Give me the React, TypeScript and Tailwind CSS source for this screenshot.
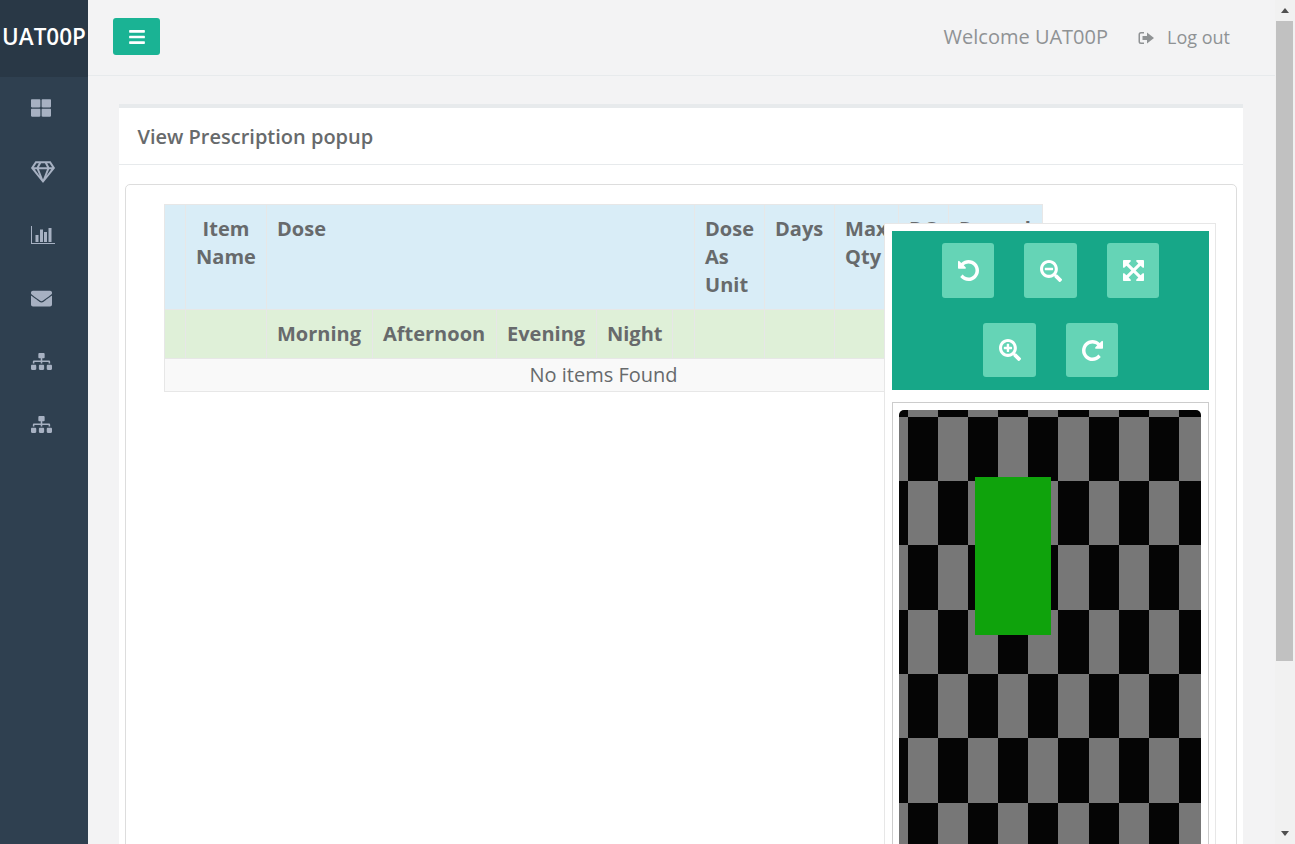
import React from 'react';
import { FaBars, FaThLarge, FaRegGem, FaEnvelope, FaSitemap, FaSearchMinus, FaSearchPlus } from 'react-icons/fa';

const BarChartIcon = () => (
  <svg width="24" height="18" viewBox="0 0 24 18" fill="currentColor">
    <path d="M0 0h1v17h23v1H0z" />
    <rect x="4.5" y="9" width="3" height="7" />
    <rect x="9" y="3.5" width="3" height="12.5" />
    <rect x="13" y="6" width="3" height="10" />
    <rect x="17.5" y="2" width="3" height="14" />
  </svg>
);

const SignOutIcon = () => (
  <svg width="17" height="14" viewBox="0 0 17 14" fill="currentColor">
    <path d="M6 1H3a2.500 2.500 0 0 0-2.500 2.500v7A2.500 2.500 0 0 0 3 13h3v-1.500H3a1 1 0 0 1-1-1v-7a1 1 0 0 1 1-1h3z" />
    <path d="M4.500 5H9V1.500L16 7l-7 5.500V9H4.500z" />
  </svg>
);

const undoPath =
  'M1536 640q0 156-61 298t-164 245-245 164-298 61q-172 0-327-72.500t-264-204.500q-7-10-6.500-22.500t8.500-20.500l137-138q10-9 25-9 16 2 23 12 73 95 179 147t225 52q104 0 198.500-40.500t163.500-109.500 109.500-163.500 40.500-198.500-40.500-198.500-109.500-163.500-163.500-109.500-198.500-40.500q-98 0-188 35.500t-160 101.500l137 138q31 30 14 69-17 40-59 40h-448q-26 0-45-19t-19-45v-448q0-42 40-59 39-17 69 14l130 129q107-101 244.500-156.500t284.500-55.500q156 0 298 61t245 164 164 245 61 298z';

const UndoIcon = () => (
  <svg width="21" height="21" viewBox="0 -128 1536 1536" fill="currentColor">
    <path d={undoPath} />
  </svg>
);

const RedoIcon = () => (
  <svg width="21" height="21" viewBox="0 -128 1536 1536" fill="currentColor">
    <path d={undoPath} transform="matrix(-1 0 0 1 1536 0)" />
  </svg>
);

const ExpandIcon = () => (
  <svg width="21" height="21" viewBox="0 0 1536 1536" fill="currentColor">
    <path d="M1283 413l-355 355 355 355 144-144q29-31 70-14 39 17 39 59v448q0 26-19 45t-45 19h-448q-42 0-59-40-17-39 14-69l144-144-355-355-355 355 144 144q31 30 14 69-17 40-59 40h-448q-26 0-45-19t-19-45v-448q0-42 40-59 39-17 69 14l144 144 355-355-355-355-144 144q-19 19-45 19-12 0-24-5-40-17-40-59v-448q0-26 19-45t45-19h448q42 0 59 40 17 39-14 69l-144 144 355 355 355-355-144-144q-31-30-14-69 17-40 59-40h448q26 0 45 19t19 45v448q0 42-39 59-13 5-25 5-26 0-45-19z" />
  </svg>
);

// test pattern shown inside the viewer
const Checkerboard = () => {
  const xs = [899, 908, 938, 968, 998, 1028, 1058, 1089, 1119, 1149, 1179, 1201];
  const ys = [410, 417, 481, 545, 610, 674, 738, 803, 867];
  const cells: React.ReactNode[] = [];
  for (let r = 0; r < ys.length - 1; r++) {
    for (let c = 0; c < xs.length - 1; c++) {
      cells.push(
        <rect
          key={`${r}-${c}`}
          x={xs[c] - 899}
          y={ys[r] - 410}
          width={xs[c + 1] - xs[c]}
          height={ys[r + 1] - ys[r]}
          fill={(r + c) % 2 === 0 ? '#050505' : '#777777'}
        />
      );
    }
  }
  return (
    <svg width="302" height="457" viewBox="0 0 302 457" className="block">
      {cells}
      <rect x="76" y="67" width="76" height="158" fill="#0fa30c" />
    </svg>
  );
};

const ViewerButton = ({ size, children }: { size: string; children: React.ReactNode }) => (
  <button className={`${size} rounded-[3px] bg-[#65d4b6] text-white flex items-center justify-center`}>
    {children}
  </button>
);

const navIcons = [
  <FaThLarge size={20} className="-mt-[2px]" />,
  <FaRegGem size={24} />,
  <BarChartIcon />,
  <FaEnvelope size={21} />,
  <FaSitemap size={21} />,
  <FaSitemap size={21} />,
];

const thClass = 'border border-[#e7e7e7] p-[10px] align-top text-left font-bold';

export default function App() {
  return (
    <div className="h-[844px] w-[1295px] overflow-hidden flex bg-[#f3f3f4] text-[#676a6c] font-['Open_Sans',sans-serif]">
      <aside className="w-[88px] shrink-0 bg-[#2f4050] text-[#a7b1c2]">
        <div className="h-[77px] pb-[3px] bg-[#293846] text-white text-[22.500px] font-semibold flex items-center justify-center">
          UAT00P
        </div>
        <nav className="flex flex-col">
          {navIcons.map((icon, i) => (
            <div key={i} className="h-[63.200px] flex items-center pl-[31px]">
              {icon}
            </div>
          ))}
        </nav>
      </aside>

      <main className="flex-1 min-w-0 flex flex-col">
        <header className="h-[76px] shrink-0 border-b border-[#e7eaec] flex items-center pl-[25px] pr-[65px] pb-[2px]">
          <button className="w-[47px] h-[37px] rounded-[3px] bg-[#1ab394] text-white flex items-center justify-center">
            <FaBars size={18} />
          </button>
          <div className="ml-auto flex items-center text-[#8f9294]">
            <span className="text-[20px]">Welcome UAT00P</span>
            <span className="ml-[30px] pt-[2px] flex items-center gap-[12px] text-[18px] font-medium">
              <SignOutIcon />
              Log out
            </span>
          </div>
        </header>

        <div className="flex-1 min-h-0 pt-[28px] pl-[31px] pr-[52px]">
          <section className="relative h-full bg-white border-t-4 border-[#e7eaec]">
            <h5 className="h-[57px] pt-[2px] px-[18.500px] flex items-center text-[20px] font-semibold border-b border-[#e7eaec]">
              View Prescription popup
            </h5>
            <div className="mx-[6px] mt-[19px] h-[800px] rounded-[5px] border border-[#dddddd] pt-[19px] pl-[38px]">
              <table className="w-[878px] table-fixed border-collapse text-[20px] leading-[28px]">
                <colgroup>
                  <col className="w-[21px]" />
                  <col className="w-[81px]" />
                  <col className="w-[106px]" />
                  <col className="w-[124px]" />
                  <col className="w-[100px]" />
                  <col className="w-[76px]" />
                  <col className="w-[22px]" />
                  <col className="w-[70px]" />
                  <col className="w-[70px]" />
                  <col className="w-[64px]" />
                  <col className="w-[50px]" />
                  <col className="w-[94px]" />
                </colgroup>
                <thead>
                  <tr className="bg-[#d9edf7] h-[105px]">
                    <th className={thClass}></th>
                    <th className={`${thClass} !text-center`}>Item Name</th>
                    <th className={thClass} colSpan={5}>Dose</th>
                    <th className={thClass}>Dose As Unit</th>
                    <th className={thClass}>Days</th>
                    <th className={thClass}>Max Qty</th>
                    <th className={thClass}>DC</th>
                    <th className={thClass}>Remark</th>
                  </tr>
                  <tr className="bg-[#dff0d8] h-[49px]">
                    <th className={thClass}></th>
                    <th className={thClass}></th>
                    <th className={thClass}>Morning</th>
                    <th className={thClass}>Afternoon</th>
                    <th className={thClass}>Evening</th>
                    <th className={thClass}>Night</th>
                    <th className={thClass}></th>
                    <th className={thClass}></th>
                    <th className={thClass}></th>
                    <th className={thClass}></th>
                    <th className={thClass}></th>
                    <th className={thClass}></th>
                  </tr>
                </thead>
                <tbody>
                  <tr className="bg-[#f9f9f9] h-[33px]">
                    <td colSpan={12} className="border border-[#e7e7e7] text-center leading-[32px]">
                      No items Found
                    </td>
                  </tr>
                </tbody>
              </table>
            </div>

            <div className="absolute left-[765px] top-[115px] w-[332px] h-[800px] bg-white border border-[#e7e7e7] pl-[7px] pt-[7px]">
              <div className="w-[317px] h-[159px] bg-[#17a788] pt-[12px] flex flex-col gap-[25px]">
                <div className="flex justify-center gap-[30px]">
                  <ViewerButton size="w-[52px] h-[55px]"><UndoIcon /></ViewerButton>
                  <ViewerButton size="w-[53px] h-[55px]"><FaSearchMinus size={22} /></ViewerButton>
                  <ViewerButton size="w-[52px] h-[55px]"><ExpandIcon /></ViewerButton>
                </div>
                <div className="flex justify-center gap-[30px]">
                  <ViewerButton size="w-[53px] h-[54px]"><FaSearchPlus size={22} /></ViewerButton>
                  <ViewerButton size="w-[52px] h-[54px]"><RedoIcon /></ViewerButton>
                </div>
              </div>
              <div className="w-[317px] mt-[12px] border border-[#cccccc] pt-[7px] pl-[6px] pb-[7px]">
                <div className="w-[302px] rounded-t-[5px] overflow-hidden">
                  <Checkerboard />
                </div>
              </div>
            </div>
          </section>
        </div>
      </main>

      {/* browser scrollbar */}
      <div className="fixed right-0 top-0 w-[20px] h-[844px] bg-[#f1f1f1] pl-[1px] flex flex-col">
        <div className="w-[17px] h-[21px] flex items-center justify-center">
          <div className="w-0 h-0 border-x-[4px] border-x-transparent border-b-[5px] border-b-[#505050]" />
        </div>
        <div className="w-[17px] h-[640px] bg-[#c1c1c1]" />
        <div className="w-[17px] mt-auto h-[21px] flex items-center justify-center">
          <div className="w-0 h-0 border-x-[4px] border-x-transparent border-t-[5px] border-t-[#505050]" />
        </div>
      </div>
    </div>
  );
}
